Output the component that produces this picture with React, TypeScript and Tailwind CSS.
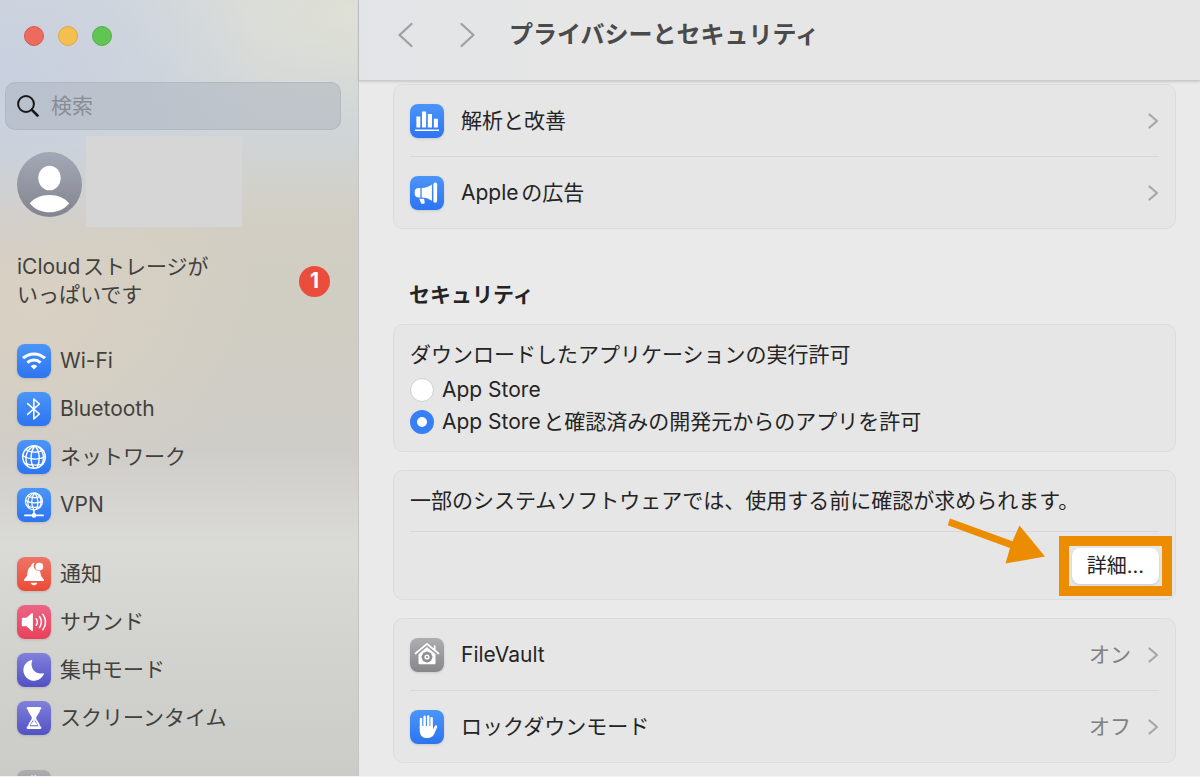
import { useState } from 'react';
import type { ReactNode } from 'react';

const tileColors = {
  blue:   'bg-linear-to-b from-[#4b95f7] to-[#2d74f2]',
  red:    'bg-linear-to-b from-[#ee7567] to-[#ea4a35]',
  pink:   'bg-linear-to-b from-[#ec6486] to-[#e93f59]',
  indigo: 'bg-linear-to-b from-[#8180dc] to-[#5251c4]',
  gray:   'bg-linear-to-b from-[#aeaeb2] to-[#87878b]',
};

type TileColor = keyof typeof tileColors;

function Tile({ color, children }: { color: TileColor; children: ReactNode }) {
  return (
    <span className={`block size-[34px] shrink-0 rounded-lg shadow-sm ${tileColors[color]}`}>
      <svg viewBox="0 0 34 34" className="size-full" fill="none" stroke="white" aria-hidden="true">
        {children}
      </svg>
    </span>
  );
}

const WifiIcon = () => (
  <g strokeWidth="3">
    <path d="M6 14.2a16.2 16.2 0 0 1 22 0" />
    <path d="M10.4 18.6a9.8 9.8 0 0 1 13.2 0" />
    <path d="M13.7 22.2a5 5 0 0 1 6.6 0L17 25.6z" fill="white" stroke="none" />
  </g>
);

const BluetoothIcon = () => (
  <path d="M10.6 11.6 22.4 22 16.8 27V7l5.6 5-11.8 10.4" strokeWidth="1.6" strokeLinejoin="round" strokeLinecap="round" />
);

const GlobeLines = () => (
  <>
    <circle cx="17" cy="17" r="11.3" />
    <path d="M18 5.8c-4.8 5.6-5.2 16.2-1 22.5M18 5.8c5.4 6.2 5.2 15.8 2 21.8M17 5.8C9.5 9.4 7 17 10.5 26M19 5.9c6.5 2.6 9.4 10.1 6 18.3" />
    <path d="M8.6 9.5c5 3.3 12.4 3.6 17.4.7M5.8 15.5c6 4.3 16 4.8 22.500 1.2M8 23.5c5.6 1.9 13.3 1.9 18.3.4" />
  </>
);

const NetworkIcon = () => (
  <g strokeWidth="1.4">
    <GlobeLines />
  </g>
);

const VpnIcon = () => (
  <>
    <g transform="translate(4.2 .6) scale(.75)" strokeWidth="1.7">
      <GlobeLines />
    </g>
    <path d="M17 22v4M7.2 27.4h19.6" strokeWidth="1.6" />
    <circle cx="17" cy="27.4" r="2.3" fill="white" stroke="none" />
  </>
);

const BellIcon = () => (
  <g fill="white" stroke="none">
    <path d="M17.6 5.8a5.3 5.3 0 0 0 5.2 8.2c.7 1 .8 2.6 1.1 4.3.5 2.2 3.1 3.4 3.1 4.9 0 .6-.4.9-1 .9H8c-.6 0-1-.3-1-.9 0-1.500 2.6-2.7 3.1-4.9.7-3.4.3-7.1 3.8-8.9.5-2 1.9-3.7 3.7-3.6z" />
    <path d="M13.7 25.7h6.6c-.4 1.6-1.6 2.5-3.3 2.5s-2.9-.9-3.3-2.5z" />
    <circle cx="22.3" cy="9.6" r="3.9" />
  </g>
);

const SoundIcon = () => (
  <>
    <path d="M4.8 13.9c0-.7.4-1.1 1.1-1.1h3.600l5.2-4.6c.6-.4 1.2-.1 1.2.6v16.6c0 .7-.7 1-1.2.5l-5.2-4.6H5.900c-.7 0-1.1-.4-1.1-1.1z" fill="white" stroke="none" />
    <g strokeWidth="1.5" strokeLinecap="round">
      <path d="M19.2 13.7c1.4 2 1.4 4.6 0 6.6" />
      <path d="M22.5 11.5c2.3 3.4 2.3 7.6 0 11" />
      <path d="M25.9 9.3c3.3 4.8 3.3 10.6 0 15.4" />
    </g>
  </>
);

const MoonIcon = () => (
  <path d="M14.4 6.9c.5-.2 1 .2.8.8-2.6 7.4 3.3 14.4 11 12.500.6-.1.9.3.7.8a10.6 10.6 0 1 1-12.5-14.1z" fill="white" stroke="none" />
);

const HourglassIcon = () => (
  <>
    <path d="M11 7.300h12M11 26.700h12" strokeWidth="2.800" strokeLinecap="round" />
    <path d="M11.600 7.500c0 5 4.200 6.500 4.200 9.500s-4.200 4.500-4.200 9.500M22.400 7.500c0 5-4.200 6.500-4.200 9.500s4.200 4.500 4.200 9.500" strokeWidth="1.800" />
    <path d="M12.200 8h9.600c-.4 4.500-4 6-4 9v3.600l3.200 3.700H13l3.200-3.700V17c0-3-3.600-4.500-4-9z" fill="white" stroke="none" />
  </>
);

const GearIcon = () => (
  <>
    <circle cx="17" cy="17" r="8.5" strokeWidth="2" />
    <circle cx="17" cy="17" r="10.8" strokeWidth="2" strokeDasharray="1.8 1.6" />
  </>
);

const ChartIcon = () => (
  <g fill="white" stroke="none">
    <path d="M6.4 12.500h3.900v11H6.400zM12 7.600h4.100v15.900H12zM17.800 10h4.200v13.500h-4.200zM23.800 14.700h4.100v8.800h-4.100z" />
    <path d="M5 25.500h24v1.500H5z" />
  </g>
);

const MegaphoneIcon = () => (
  <g fill="white" stroke="none">
    <path d="M10.400 11.900H8.700c-2.500 0-4 1.500-4 3.900v1.700c0 2.400 1.500 4 4 4h1.700z" />
    <path d="M11.700 11.900c4 0 7.200-1.300 10.200-3.500v16.400c-3-2.100-6.200-3.300-10.200-3.300z" />
    <rect x="23.4" y="6.5" width="3.7" height="20.3" rx="1.8" />
    <path d="M9.300 22.700h4.800l.6 3.900c.1.700-.3 1.200-1 1.200h-1.500c-.6 0-1-.3-1.200-.9z" />
  </g>
);

const FileVaultIcon = () => (
  <>
    <path d="M5.5 15.500 17 5.900l11.500 9.600M24.700 7.800v4" strokeWidth="1.700" strokeLinecap="round" />
    <path d="M8.500 16.200 17 9.100l8.500 7.100v8.700c0 .8-.5 1.300-1.300 1.300H9.800c-.8 0-1.300-.5-1.300-1.300z" fill="white" stroke="none" />
    <circle cx="17" cy="19" r="3.9" stroke="#8e8e92" strokeWidth="2.600" />
    <path d="M17 13.400v2.200M17 22.400v2.200M11.400 19h2.200M20.400 19h2.200M13 15l1.600 1.600M19.400 21.400 21 23M21 15l-1.600 1.600M14.600 21.400 13 23" stroke="#8e8e92" strokeWidth="1.200" />
    <circle cx="17" cy="19" r="1.1" fill="#8e8e92" stroke="none" />
  </>
);

const HandIcon = () => (
  <>
    <path d="M11 18.500V9M14.600 17V6.800M18.200 17V6.400M21.600 18V8.300" strokeWidth="2.500" strokeLinecap="round" />
    <path d="M9.750 16h13.100v3.600l1.700-3c.6-1.300 1.400-1.500 2.100-1.200.7.400.6 1.200.3 2l-2.300 5.700c-1.500 3.600-3.700 5-7.600 5-4.700 0-7.300-2.900-7.300-7.600z" fill="white" stroke="none" />
  </>
);

const sidebarGroups: { label: string; color: TileColor; icon: ReactNode }[][] = [
  [
    { label: 'Wi-Fi',        color: 'blue', icon: <WifiIcon /> },
    { label: 'Bluetooth',    color: 'blue', icon: <BluetoothIcon /> },
    { label: 'ネットワーク', color: 'blue', icon: <NetworkIcon /> },
    { label: 'VPN',          color: 'blue', icon: <VpnIcon /> },
  ],
  [
    { label: '通知',             color: 'red',    icon: <BellIcon /> },
    { label: 'サウンド',         color: 'pink',   icon: <SoundIcon /> },
    { label: '集中モード',       color: 'indigo', icon: <MoonIcon /> },
    { label: 'スクリーンタイム', color: 'indigo', icon: <HourglassIcon /> },
  ],
];

function Sidebar() {
  return (
    <aside className="flex w-[358px] shrink-0 flex-col overflow-hidden bg-[radial-gradient(ellipse_260px_190px_at_0%_10%,#c8d0e0_0%,#c8d0e000_100%),radial-gradient(ellipse_260px_110px_at_100%_2%,#dfe0d5_0%,#dfe0d500_100%),radial-gradient(ellipse_230px_180px_at_10%_40%,#d9d1c3_0%,#d9d1c300_100%),linear-gradient(to_bottom,#d2d8dc_0%,#d0d5d8_17%,#d2cec3_29%,#d0cdc3_42%,#cfcdc9_58%,#dadad7_70%,#d2d2ce_84%,#cbcbc8_100%)] text-[#42413d]">
      <div className="flex gap-3.5 pt-[26px] pl-6">
        <button aria-label="閉じる" className="size-5 rounded-full border border-[#d95a50] bg-[#ed6a5e]" />
        <button aria-label="しまう" className="size-5 rounded-full border border-[#dfa944] bg-[#f5bf4f]" />
        <button aria-label="拡大" className="size-5 rounded-full border border-[#53b148] bg-[#61c554]" />
      </div>

      <label className="mt-9 mr-[17px] ml-[5px] flex h-12 shrink-0 items-center gap-3 rounded-[10px] border border-[#adb3b9]/70 bg-[#a3aab4]/40 px-[11px]">
        <svg viewBox="0 0 22 22" className="size-[22px] shrink-0" fill="none" stroke="#17181a" aria-hidden="true">
          <circle cx="9" cy="9" r="7.9" strokeWidth="2" />
          <path d="m14.8 14.8 5.7 5.7" strokeWidth="2.6" strokeLinecap="round" />
        </svg>
        <input type="search" aria-label="検索" placeholder="検索" className="w-full min-w-0 bg-transparent outline-none placeholder:text-[#888d93]" />
      </label>

      <div className="mt-1.5 flex items-center gap-1 pl-[17px]">
        <svg viewBox="0 0 65 65" className="mt-1.5 size-[65px] shrink-0" aria-hidden="true">
          <defs>
            <linearGradient id="avatar" x1="0" y1="0" x2="0" y2="1">
              <stop offset="0" stopColor="#a4a8b6" />
              <stop offset="1" stopColor="#82858f" />
            </linearGradient>
          </defs>
          <circle cx="32.5" cy="32.5" r="32.5" fill="url(#avatar)" />
          <ellipse cx="32.5" cy="26" rx="11.2" ry="12.3" fill="white" />
          <path d="M12.8 51.5C17 46 24 43 32.5 43s15.500 3 19.700 8.500C47 57.500 40 60.300 32.500 60.300s-14.500-2.800-19.700-8.800z" fill="white" />
        </svg>
        <div className="h-[91px] w-[156px] bg-[#d6d6d6]" />
      </div>

      <div className="mt-[26px] flex items-center justify-between pr-7 pl-[17px]">
        <p className="leading-7">iCloudストレージが<br />いっぱいです</p>
        <span className="flex size-[31px] items-center justify-center rounded-full bg-[#eb4d3c] font-bold text-white">1</span>
      </div>

      <nav className="mt-7 flex flex-col gap-[21px]">
        {sidebarGroups.map((group, i) => (
          <ul key={i}>
            {group.map(item => (
              <li key={item.label}>
                <a href="#" className="flex h-12 items-center gap-[9px] pl-[17px]">
                  <Tile color={item.color}>{item.icon}</Tile>
                  {item.label}
                </a>
              </li>
            ))}
          </ul>
        ))}
        <a href="#" aria-label="一般" className="flex h-12 items-center pl-[17px]">
          <Tile color="gray"><GearIcon /></Tile>
        </a>
      </nav>
    </aside>
  );
}

function Card({ className = '', children }: { className?: string; children: ReactNode }) {
  return (
    <section className={`rounded-[10px] border border-[#dcdcdc] bg-[#e6e6e6] px-4 ${className}`}>
      {children}
    </section>
  );
}

function Row({ label, value, color, icon }: { label: string; value?: string; color: TileColor; icon: ReactNode }) {
  return (
    <button className="flex h-[71px] w-full items-center gap-4 text-left">
      <Tile color={color}>{icon}</Tile>
      <span className="grow pl-px">{label}</span>
      {value && <span className="text-[#808080]">{value}</span>}
      <svg viewBox="0 0 12 18" className="h-[18px] w-3 shrink-0" fill="none" stroke="#a8a8a8" strokeWidth="2.3" strokeLinecap="round" strokeLinejoin="round" aria-hidden="true">
        <path d="m2.500 2.500 7.500 6.500-7.500 6.500" />
      </svg>
    </button>
  );
}

const sources = ['App Store', 'App Storeと確認済みの開発元からのアプリを許可'];

export default function App() {
  const [source, setSource] = useState(1);

  return (
    <div className="flex h-screen overflow-hidden border-b border-[#f4f4f4] bg-[#eaeaea] font-['Inter','Noto_Sans_CJK_JP',sans-serif] text-[21px] leading-7 text-[#242424] [text-autospace:normal]">
      <Sidebar />

      <main className="flex min-w-0 grow flex-col border-l border-[#c4c4c2]">
        <header className="z-10 flex h-[81px] shrink-0 items-center border-b border-[#cbcbcb] bg-linear-to-r from-[#e2e4e7] via-[#e6e6e6] via-25% to-[#e6e6e6] pb-2.5 pl-[38px] shadow-sm">
          <button aria-label="戻る" className="mr-[45px]">
            <svg viewBox="0 0 17 26" className="h-[26px] w-[17px]" fill="none" stroke="#a0a0a0" strokeWidth="2.3" strokeLinecap="round" strokeLinejoin="round">
              <path d="M14.500 2 2.500 13l12 11" />
            </svg>
          </button>
          <button aria-label="進む" className="mr-[33px]">
            <svg viewBox="0 0 17 26" className="h-[26px] w-[17px]" fill="none" stroke="#a0a0a0" strokeWidth="2.3" strokeLinecap="round" strokeLinejoin="round">
              <path d="m2.500 2 12 11-12 11" />
            </svg>
          </button>
          <h1 className="text-[24px] font-bold text-[#4a4a4a]">プライバシーとセキュリティ</h1>
        </header>

        <div className="flex flex-col overflow-hidden pt-[3px] pr-6 pb-3.5 pl-[34px]">
          <Card className="shrink-0">
            <Row label="解析と改善" color="blue" icon={<ChartIcon />} />
            <hr className="border-[#d8d8d8]" />
            <Row label="Appleの広告" color="blue" icon={<MegaphoneIcon />} />
          </Card>

          <h2 className="mt-[52px] mb-[15px] pl-4 font-bold">セキュリティ</h2>

          <div className="flex shrink-0 flex-col gap-[18px]">
            <Card className="pt-4 pb-[13px]">
              <fieldset>
                <legend>ダウンロードしたアプリケーションの実行許可</legend>
                <div className="pt-[5px]">
                  {sources.map((name, i) => (
                    <label key={name} className="flex h-8 items-center gap-2">
                      <input
                        type="radio"
                        name="source"
                        checked={source === i}
                        onChange={() => setSource(i)}
                        className="size-6 shrink-0 appearance-none rounded-full border border-[#cfcfcf] bg-white checked:border-[7px] checked:border-[#377ff5]"
                      />
                      {name}
                    </label>
                  ))}
                </div>
              </fieldset>
            </Card>

            <Card className="pt-4 pb-[15px]">
              <p className="mb-4">一部のシステムソフトウェアでは、使用する前に確認が求められます。</p>
              <hr className="border-[#d8d8d8]" />
              <div className="flex justify-end pt-4">
                <div className="relative">
                  <button className="h-9 w-[87px] rounded-lg bg-white text-[20px] shadow">詳細...</button>
                  <div className="pointer-events-none absolute -inset-x-[13px] -inset-y-3 border-10 border-[#ec8c00]" />
                  <svg viewBox="0 0 98 48" className="pointer-events-none absolute -top-8 right-[114px] h-12 w-[98px]" fill="#ec8c00" aria-hidden="true">
                    <path d="M3 2.500 65.500 25.200 72.500 9.500 98 40.500 58.500 47.500 63 32 .7 9.300z" />
                  </svg>
                </div>
              </div>
            </Card>

            <Card>
              <Row label="FileVault" value="オン" color="gray" icon={<FileVaultIcon />} />
              <hr className="border-[#d8d8d8]" />
              <Row label="ロックダウンモード" value="オフ" color="blue" icon={<HandIcon />} />
            </Card>
          </div>
        </div>
      </main>
    </div>
  );
}
